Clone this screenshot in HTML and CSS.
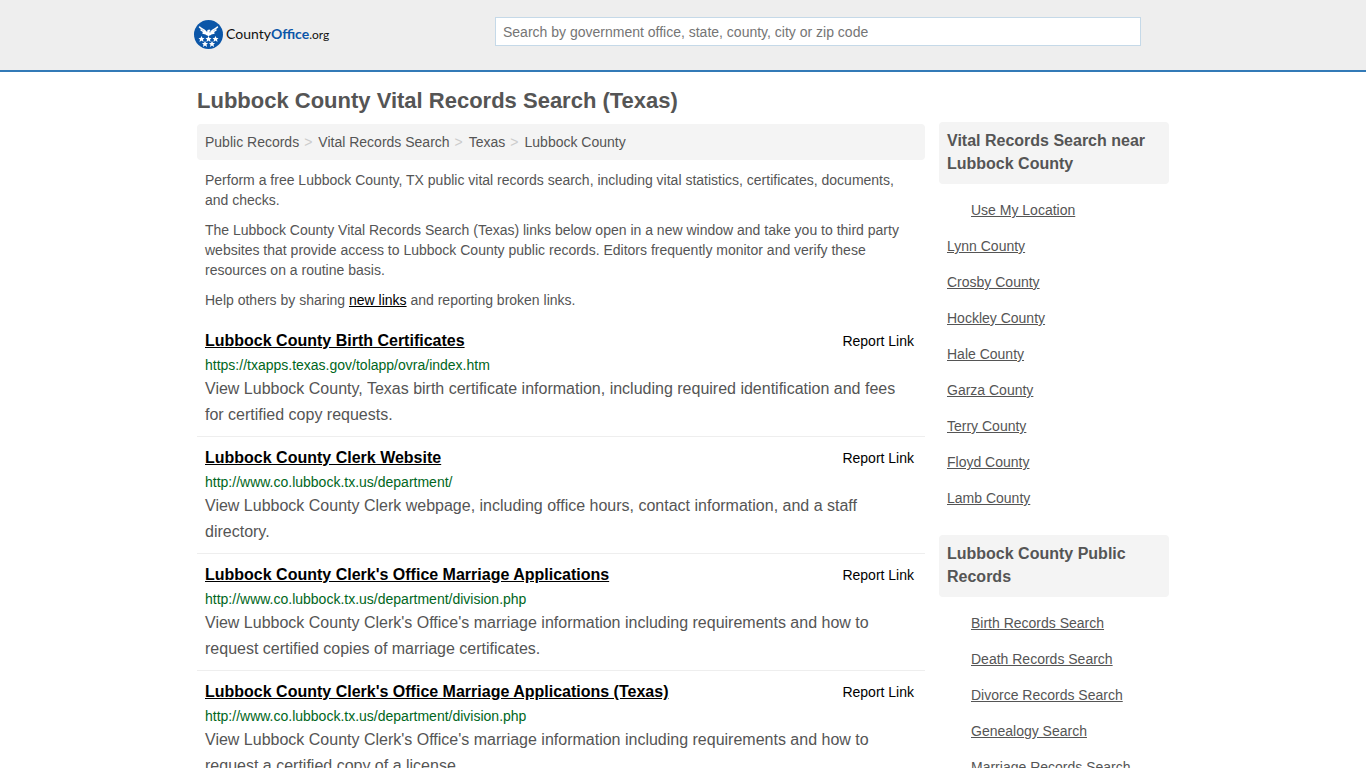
FILE: index.html
```html
<!DOCTYPE html>
<html lang="en">
<head>
    <meta charset="UTF-8">
    <meta name="viewport" content="width=device-width, initial-scale=1.0">
    <title>Lubbock County Vital Records Search (Texas)</title>
    <link rel="stylesheet" href="styles.css">
</head>
<body>
    <header class="header">
        <div class="container header-inner">
            <a class="logo" href="#">
                <svg class="logo-mark" viewBox="0 0 58 58" aria-hidden="true">
                    <circle cx="29" cy="29" r="29" fill="#0b56a8"/>
                    <path fill="none" stroke="#fff" stroke-width="3" stroke-linecap="round" d="M11 14c3 4 9 4 13 10M14 20c3 3 7 3 10 6M18 26c2 1 4 1 7 2M47 14c-3 4-9 4-13 10M44 20c-3 3-7 3-10 6M40 26c-2 1-4 1-7 2"/>
                    <g fill="#fff">
                        <path d="M23 22l3 3 1-5 4-1 2 2-2 2 1 3 3-4-1 8-3 1-2 2-2-2-3-1z"/>
                        <path id="star" d="M15 32l2 4h4l-3 3 1 5-4-3-4 3 1-5-3-3h4z"/>
                        <use href="#star" x="14"/>
                        <use href="#star" x="28"/>
                        <use href="#star" x="7" y="10"/>
                        <use href="#star" x="21" y="10"/>
                    </g>
                </svg>
                <span class="logo-text">County<b>Office</b><small>.org</small></span>
            </a>
            <form class="search">
                <input type="text" class="search-input" aria-label="Search" placeholder="Search by government office, state, county, city or zip code">
            </form>
        </div>
    </header>

    <div class="container">
        <h1>Lubbock County Vital Records Search (Texas)</h1>
        <div class="columns">
            <main class="content">
                <nav>
                    <ol class="breadcrumb">
                        <li><a href="#">Public Records</a></li>
                        <li><a href="#">Vital Records Search</a></li>
                        <li><a href="#">Texas</a></li>
                        <li><a href="#">Lubbock County</a></li>
                    </ol>
                </nav>

                <div class="intro">
                    <p>Perform a free Lubbock County, TX public vital records search, including vital statistics, certificates, documents, and checks.</p>
                    <p>The Lubbock County Vital Records Search (Texas) links below open in a new window and take you to third party websites that provide access to Lubbock County public records. Editors frequently monitor and verify these resources on a routine basis.</p>
                    <p>Help others by sharing <a href="#">new links</a> and reporting broken links.</p>
                </div>

                <!-- results start-->
                <div class="result">
                    <div class="result-head">
                        <a class="result-title" href="#">Lubbock County Birth Certificates</a>
                        <a class="report" href="#">Report Link</a>
                    </div>
                    <div class="result-url">https://txapps.texas.gov/tolapp/ovra/index.htm</div>
                    <div class="result-text">View Lubbock County, Texas birth certificate information, including required identification and fees for certified copy requests.</div>
                </div>
                <div class="result">
                    <div class="result-head">
                        <a class="result-title" href="#">Lubbock County Clerk Website</a>
                        <a class="report" href="#">Report Link</a>
                    </div>
                    <div class="result-url">http://www.co.lubbock.tx.us/department/</div>
                    <div class="result-text">View Lubbock County Clerk webpage, including office hours, contact information, and a staff directory.</div>
                </div>
                <div class="result">
                    <div class="result-head">
                        <a class="result-title" href="#">Lubbock County Clerk's Office Marriage Applications</a>
                        <a class="report" href="#">Report Link</a>
                    </div>
                    <div class="result-url">http://www.co.lubbock.tx.us/department/division.php</div>
                    <div class="result-text">View Lubbock County Clerk's Office's marriage information including requirements and how to request certified copies of marriage certificates.</div>
                </div>
                <div class="result">
                    <div class="result-head">
                        <a class="result-title" href="#">Lubbock County Clerk's Office Marriage Applications (Texas)</a>
                        <a class="report" href="#">Report Link</a>
                    </div>
                    <div class="result-url">http://www.co.lubbock.tx.us/department/division.php</div>
                    <div class="result-text">View Lubbock County Clerk's Office's marriage information including requirements and how to request a certified copy of a license.</div>
                </div>
                <!-- results end-->
            </main>

            <aside class="sidebar">
                <h2>Vital Records Search near Lubbock County</h2>
                <ul>
                    <li class="indent"><a href="#">Use My Location</a></li>
                    <li><a href="#">Lynn County</a></li>
                    <li><a href="#">Crosby County</a></li>
                    <li><a href="#">Hockley County</a></li>
                    <li><a href="#">Hale County</a></li>
                    <li><a href="#">Garza County</a></li>
                    <li><a href="#">Terry County</a></li>
                    <li><a href="#">Floyd County</a></li>
                    <li><a href="#">Lamb County</a></li>
                </ul>
                <h2>Lubbock County Public Records</h2>
                <ul>
                    <li class="indent"><a href="#">Birth Records Search</a></li>
                    <li class="indent"><a href="#">Death Records Search</a></li>
                    <li class="indent"><a href="#">Divorce Records Search</a></li>
                    <li class="indent"><a href="#">Genealogy Search</a></li>
                    <li class="indent"><a href="#">Marriage Records Search</a></li>
                </ul>
            </aside>
        </div>
    </div>
</body>
</html>
```

FILE: styles.css
```css
* {
    box-sizing: border-box;
}

body {
    margin: 0;
    font-family: "Liberation Sans", Arial, Helvetica, sans-serif;
    font-size: 14px;
    line-height: 20px;
    color: #555;
    background-color: #fff;
}

.container {
    max-width: 980px;
    margin: 0 auto;
    padding: 0 4px;
}

/* header */
.header {
    background-color: #eee;
    border-bottom: 2px solid #337ab7;
}

.header-inner {
    display: flex;
    justify-content: space-between;
    padding: 17px 32px 21px 1px;
}

.logo {
    display: flex;
    align-items: center;
    gap: 3px;
    height: 29px;
    margin-top: 3px;
    color: #111;
    text-decoration: none;
}

.logo-mark {
    width: 29px;
    height: 29px;
}

.logo-text {
    font-family: Lato, sans-serif;
    font-size: 14px;
}

.logo-text b {
    color: #0b56a8;
}

.logo-text small {
    font-size: 12px;
}

.search {
    width: 646px;
}

.search-input {
    display: block;
    width: 100%;
    height: 29px;
    padding: 0 7px;
    border: 1px solid #c5d9e8;
    font-family: inherit;
    font-size: 14px;
    color: #555;
    background-color: #fff;
    outline: 0;
}

.search-input::placeholder {
    color: #757575;
}

/* page */
h1 {
    margin: 16px 0 8px;
    font-size: 22px;
    line-height: 26px;
}

.columns {
    display: flex;
    align-items: flex-start;
    gap: 14px;
}

.content {
    flex: 1;
    padding-top: 2px;
}

.breadcrumb {
    display: flex;
    margin: 0 0 10px;
    padding: 8px;
    list-style: none;
    background-color: #f4f4f4;
    border-radius: 4px;
}

.breadcrumb a {
    color: #555;
    text-decoration: none;
}

.breadcrumb li + li::before {
    content: ">";
    padding: 0 6px 0 5px;
    color: #ccc;
}

.intro {
    padding: 0 8px;
}

.intro p {
    margin: 0 0 10px;
}

.intro a {
    color: #000;
}

.result {
    padding: 8px;
    border-bottom: 1px solid #eee;
}

.result-head {
    display: flex;
    justify-content: space-between;
    padding-right: 3px;
    line-height: 26px;
}

.result-title {
    font-size: 16px;
    font-weight: bold;
    color: #000;
}

.report {
    color: #000;
    text-decoration: none;
}

.result-url {
    line-height: 22px;
    color: #006621;
}

.result-text {
    font-size: 16px;
    line-height: 26px;
}

/* sidebar */
.sidebar {
    width: 230px;
}

.sidebar h2 {
    margin: 0 0 8px;
    padding: 7px 8px 9px;
    font-size: 16px;
    line-height: 23px;
    background-color: #f4f4f4;
    border-radius: 4px;
}

.sidebar ul {
    margin: 0 0 19px;
    padding: 0 8px;
    list-style: none;
}

.sidebar li {
    padding: 8px 0;
}

.sidebar .indent {
    padding-left: 24px;
}

.sidebar a {
    color: #555;
}
```
